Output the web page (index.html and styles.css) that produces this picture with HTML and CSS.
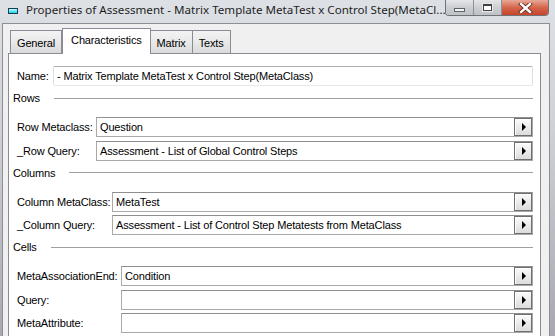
FILE: index.html
```html
<!DOCTYPE html>
<html lang="en">
<head>
  <meta charset="UTF-8">
  <title>Properties of Assessment</title>
  <link rel="stylesheet" href="styles.css">
</head>
<body>
  <div class="titlebar">
    <span class="app-icon"></span>
    <span class="title">Properties of Assessment - Matrix Template MetaTest x Control Step(MetaCl...</span>
    <div class="caption-buttons">
      <span class="cap-btn min"><span class="min-glyph"></span></span>
      <span class="cap-btn max"><span class="max-glyph"></span></span>
      <span class="cap-btn close">
        <svg width="15" height="10" viewBox="0 0 15 10">
          <path d="M3 1 L12 9 M12 1 L3 9" stroke="#5a2418" stroke-width="4" stroke-linecap="square"/>
          <path d="M3 1 L12 9 M12 1 L3 9" stroke="#fff" stroke-width="2.4" stroke-linecap="square"/>
        </svg>
      </span>
    </div>
  </div>

  <div class="client">
    <div class="tabs">
      <div class="tab">General</div>
      <div class="tab active">Characteristics</div>
      <div class="tab">Matrix</div>
      <div class="tab">Texts</div>
    </div>

    <div class="panel">
      <div class="form-row name-row">
        <label>Name:</label>
        <div class="textbox">- Matrix Template MetaTest x Control Step(MetaClass)</div>
      </div>

      <div class="group-title"><span>Rows</span></div>
      <div class="group rows-group">
        <label>Row Metaclass:</label>
        <div class="combo"><span class="value">Question</span><span class="combo-btn"></span></div>
        <label>_Row Query:</label>
        <div class="combo"><span class="value">Assessment - List of Global Control Steps</span><span class="combo-btn"></span></div>
      </div>

      <div class="group-title"><span>Columns</span></div>
      <div class="group columns-group">
        <label>Column MetaClass:</label>
        <div class="combo"><span class="value">MetaTest</span><span class="combo-btn"></span></div>
        <label>_Column Query:</label>
        <div class="combo"><span class="value">Assessment - List of Control Step Metatests from MetaClass</span><span class="combo-btn"></span></div>
      </div>

      <div class="group-title"><span>Cells</span></div>
      <div class="group cells-group">
        <label>MetaAssociationEnd:</label>
        <div class="combo"><span class="value">Condition</span><span class="combo-btn"></span></div>
        <label>Query:</label>
        <div class="combo"><span class="value"></span><span class="combo-btn"></span></div>
        <label>MetaAttribute:</label>
        <div class="combo"><span class="value"></span><span class="combo-btn"></span></div>
      </div>
    </div>
  </div>
</body>
</html>
```

FILE: styles.css
```css
html, body {
  margin: 0;
  height: 336px;
  overflow: hidden;
}
body {
  font-family: "Liberation Sans", Arial, sans-serif;
  font-size: 11px;
  color: #000;
  background: linear-gradient(to bottom, #dde1e5 0, #cfd3d8 120px, #a9a7b0 336px);
}

/* title bar */
.titlebar {
  height: 22px;
  display: flex;
  align-items: flex-start;
  padding: 0 6px 0 8px;
}
.app-icon {
  flex-shrink: 0;
  width: 8px;
  height: 4px;
  margin-top: 8px;
  border: 1px solid #1b3c5a;
  background: linear-gradient(to bottom, #b9ffff, #19d3e0);
}
.title {
  min-width: 0;
  overflow: hidden;
  margin: 3px 0 0 8px;
  font-family: "Noto Sans", "Liberation Sans", sans-serif;
  font-size: 11.6px;
  line-height: 14px;
  color: #1e1e1e;
  white-space: nowrap;
}
.caption-buttons {
  flex-shrink: 0;
  margin-left: auto;
  display: flex;
  height: 15px;
  border: 1px solid #6f7479;
  border-top: none;
  border-radius: 0 0 4px 4px;
  overflow: hidden;
}
.cap-btn {
  display: flex;
  align-items: center;
  justify-content: center;
  height: 15px;
}
.min, .max {
  width: 27px;
  background: linear-gradient(to bottom, #e4e6e8, #c9ccd0 55%, #bfc3c7);
  border-right: 1px solid #8d9195;
}
.min-glyph {
  width: 9px;
  height: 2px;
  margin-top: 4px;
  background: #f4f4f4;
  border: 1px solid #5f6368;
}
.max-glyph {
  width: 7px;
  height: 4px;
  border: 1px solid #3e4246;
  border-top-width: 2px;
  background: #fff;
  box-shadow: 0 0 0 1px #e8e8e8;
}
.close {
  width: 46px;
  background: linear-gradient(to bottom, #e8a898, #d6664c 50%, #c4452c);
}

/* dialog client area */
.client {
  margin: 1px 5px 0 2px;
  height: 330px;
  box-sizing: border-box;
  border: 1px solid #8b9096;
  background: #f0f0f0;
  padding: 4px 8px 0 5px;
  letter-spacing: -0.15px;
}

.tabs {
  display: flex;
  align-items: flex-end;
  height: 25px;
  padding-left: 2px;
}
.tab {
  height: 22px;
  line-height: 24px;
  padding: 0 6px;
  border: 1px solid #898c95;
  border-bottom: none;
  border-left: none;
  background: linear-gradient(to bottom, #f3f3f3, #e9e9e9 50%, #dadada);
}
.tab:first-child {
  border-left: 1px solid #898c95;
}
.tab.active {
  height: 25px;
  line-height: 22px;
  padding: 0 8px;
  margin-bottom: -1px;
  position: relative;
  z-index: 1;
  background: #fff;
  border-left: 1px solid #898c95;
}

.panel {
  height: 300px;
  background: #fff;
  border: 1px solid #898c95;
  padding: 12px 7px 0 8px;
}

.form-row, .group {
  display: grid;
  align-items: center;
  row-gap: 3.5px;
}
.name-row { grid-template-columns: 36px 1fr; }
.rows-group { grid-template-columns: 79px 1fr; }
.columns-group { grid-template-columns: 95px 1fr; }
.cells-group { grid-template-columns: 104px 1fr; }

label {
  white-space: nowrap;
}

.textbox {
  height: 20px;
  box-sizing: border-box;
  border: 1px solid #dbdfe6;
  border-top-color: #abadb3;
  border-bottom-color: #e3e9ef;
  border-radius: 2px;
  padding-left: 3px;
  line-height: 18px;
  white-space: nowrap;
}

.group-title {
  display: flex;
  align-items: center;
  height: 14px;
  margin: 5px 0 12px -4px;
}
.group-title::after {
  content: "";
  flex: 1;
  height: 1px;
  margin-left: 14px;
  background: #a0a0a0;
}

.combo {
  display: flex;
  height: 20px;
  box-sizing: border-box;
  border: 1px solid #a9a9a9;
  border-top-color: #8f8f8f;
  align-items: center;
}
.combo .value {
  flex: 1;
  padding-left: 3px;
  white-space: nowrap;
  overflow: hidden;
}
.combo-btn {
  width: 18px;
  height: 18px;
  box-sizing: border-box;
  border: 1px solid #6f6f6f;
  box-shadow: inset 1px 1px 0 #fff;
  background: linear-gradient(to bottom, #fbfbfb, #dcdcdc);
  display: flex;
  align-items: center;
  justify-content: center;
}
.combo-btn::before {
  content: "";
  border-left: 4px solid #000;
  border-top: 4px solid transparent;
  border-bottom: 4px solid transparent;
  margin-left: 1px;
}
```
